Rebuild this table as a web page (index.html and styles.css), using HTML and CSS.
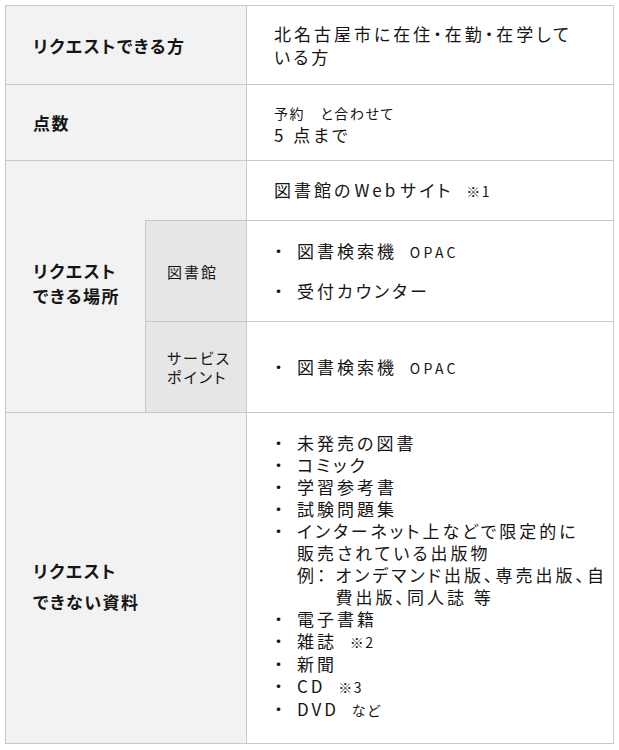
FILE: index.html
```html
<!DOCTYPE html>
<html lang="ja">
<head>
<meta charset="utf-8">
<title>リクエスト</title>
<link rel="stylesheet" href="styles.css">
</head>
<body>
<div class="req-table">
  <div class="th row1">リクエストできる方</div>
  <div class="td row1">
    <p class="txt">北名古屋市に在住・在勤・在学して<br>いる方</p>
  </div>

  <div class="th row2">点数</div>
  <div class="td row2">
    <p class="txt count"><span class="small">予約　と合わせて</span><br>5 点まで</p>
  </div>

  <div class="th place">
    <p class="label"><span>リクエスト</span><span>できる場所</span></p>
  </div>
  <div class="td row3">
    <p class="txt">図書館の<span class="latin">Web</span>サイト <span class="small note">※1</span></p>
  </div>

  <div class="sub row4">図書館</div>
  <div class="td row4">
    <ul class="list spaced">
      <li><div>図書検索機 <span class="small note wide">OPAC</span></div></li>
      <li><div>受付カウンター</div></li>
    </ul>
  </div>

  <div class="sub row5"><p class="sub-label">サービス<br>ポイント</p></div>
  <div class="td row5">
    <ul class="list">
      <li><div>図書検索機 <span class="small note wide">OPAC</span></div></li>
    </ul>
  </div>

  <div class="th row6">
    <p class="label loose"><span>リクエスト</span><span>できない資料</span></p>
  </div>
  <div class="td row6 top">
    <ul class="list">
      <li><div>未発売の図書</div></li>
      <li><div>コミック</div></li>
      <li><div>学習参考書</div></li>
      <li><div>試験問題集</div></li>
      <li><div>インターネット上などで限定的に<br>販売されている出版物
        <div class="ex"><span class="ex-key">例：</span><span class="ex-text">オンデマンド出版、専売出版、自<br>費出版、同人誌 等</span></div>
      </div></li>
      <li><div>電子書籍</div></li>
      <li><div>雑誌 <span class="small note">※2</span></div></li>
      <li><div>新聞</div></li>
      <li><div>CD <span class="small note">※3</span></div></li>
      <li><div>DVD <span class="small note">など</span></div></li>
    </ul>
  </div>
</div>
</body>
</html>
```

FILE: styles.css
```css
* { box-sizing: border-box; }

html, body {
  margin: 0;
  background: #ffffff;
}

body {
  padding: 5px;
  font-family: "Noto Sans CJK JP", "Noto Sans", sans-serif;
  color: #151515;
}

p, ul { margin: 0; padding: 0; }
ul { list-style: none; }

.req-table {
  display: grid;
  width: 609px;
  grid-template-columns: 140px 101px 367px;
  grid-template-rows: 79px 76px 60px 101px 91px 331px;
  border-right: 1px solid #c8c8c8;
  border-bottom: 1px solid #c8c8c8;
}

.th, .td, .sub {
  display: flex;
  align-items: center;
  border-top: 1px solid #c8c8c8;
  border-left: 1px solid #c8c8c8;
}

.th {
  grid-column: 1 / 3;
  background: #f2f2f2;
  padding-left: 27px;
  font-size: 17px;
  font-weight: 700;
  letter-spacing: 1.5px;
  font-feature-settings: "palt";
}

.td {
  grid-column: 3;
  padding: 0 6px 0 27px;
  font-size: 17px;
  letter-spacing: 3px;
  font-feature-settings: "palt";
}

.sub {
  grid-column: 2;
  background: #e6e6e6;
  padding-left: 21px;
  font-size: 15px;
  letter-spacing: 2px;
  font-feature-settings: "palt";
}

.row1 { grid-row: 1; }
.row2 { grid-row: 2; }
.row3 { grid-row: 3; }
.row4 { grid-row: 4; }
.row5 { grid-row: 5; }
.row6 { grid-row: 6; }
.place { grid-row: 3 / 6; }

.td.top { align-items: flex-start; padding-top: 19px; }

.txt { line-height: 23px; }
.count { line-height: 21px; }

.latin { margin: 0 2px 0 1px; }

.small {
  font-size: 14px;
  letter-spacing: 1.5px;
}

.note { margin-left: 6px; }
.note.wide { letter-spacing: 3.3px; }

.label {
  display: flex;
  flex-direction: column;
  line-height: 25px;
  margin-top: -8px;
}

.label.loose {
  line-height: 31px;
  margin-top: 16px;
}

.sub-label { line-height: 19px; }

.list { line-height: 22px; }

.list li {
  display: flex;
}

.list li::before {
  content: "・";
  flex: none;
  width: 27px;
  margin-left: -4px;
  letter-spacing: 0;
  font-feature-settings: normal;
}

.list.spaced li + li { margin-top: 17px; }

.ex { display: flex; }
.ex-key { flex: none; margin-right: 7px; }
.ex-text { white-space: nowrap; }
```
